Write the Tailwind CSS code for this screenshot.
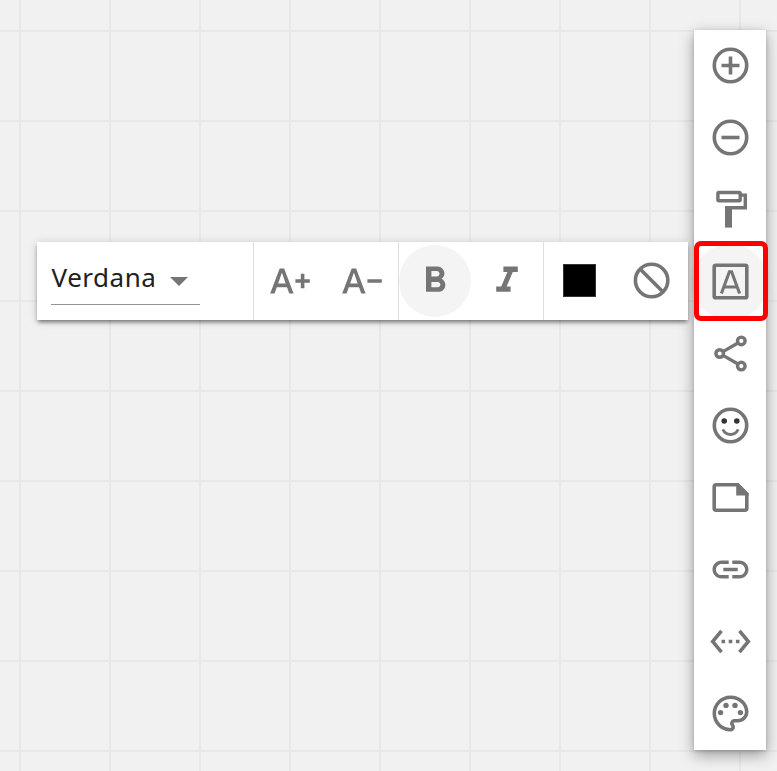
<!DOCTYPE html>
<html lang="en">
<head>
<meta charset="utf-8">
<title>Text formatting</title>
<script src="https://cdn.jsdelivr.net/npm/@tailwindcss/browser@4"></script>
</head>
<body class="relative h-[771px] w-[777px] overflow-hidden bg-[#f1f1f1] font-['Noto_Sans',sans-serif] text-[#757575]">
<div class="absolute inset-0 bg-[linear-gradient(to_right,#e8e8e8_2px,transparent_2px),linear-gradient(to_bottom,#e8e8e8_2px,transparent_2px)] bg-[length:90px_90px] bg-[position:19px_0px,0px_30px]"></div>

<!-- vertical tool rail -->
<nav class="absolute left-[694px] top-[30px] flex h-[720px] w-[72px] flex-col bg-white shadow-[0_5px_14px_rgba(0,0,0,0.36),0_1px_4px_rgba(0,0,0,0.14)]">
  <button class="size-[72px]"><svg class="size-[72px]" viewBox="0 0 72 72" fill="none" stroke="currentColor" stroke-width="3.6"><circle cx="36.5" cy="35.5" r="16.2"/><path d="M36.5 26.5v18M27.5 35.5h18"/></svg></button>
  <button class="size-[72px]"><svg class="size-[72px]" viewBox="0 0 72 72" fill="none" stroke="currentColor" stroke-width="3.6"><circle cx="36.5" cy="35.5" r="16.2"/><path d="M27.5 35.5h18"/></svg></button>
  <button class="size-[72px]"><svg class="size-[72px]" viewBox="0 0 72 72" fill="none" stroke="currentColor" stroke-width="3.4"><rect x="23.9" y="18.5" width="22.3" height="8.2" rx="1"/><path d="M47 21.1H51.3V33.7H31"/><path d="M34.5 32V53.6" stroke-width="7"/></svg></button>
  <button class="size-[72px] rounded-full bg-[#f4f4f4] shadow-[0_0_5px_rgba(0,0,0,0.12)]"><svg class="size-[72px]" viewBox="0 0 72 72" fill="none" stroke="currentColor"><rect x="20.2" y="19.2" width="32.6" height="32.6" rx="1.6" stroke-width="3.6"/><path d="M27.4 47.5L35.4 25.8H37.6L45.6 47.5M30.3 41H42.7" stroke-width="3.1"/></svg></button>
  <button class="size-[72px]"><svg class="size-[72px]" viewBox="0 0 72 72" fill="none" stroke="currentColor" stroke-width="3.4"><path d="M29.5 33.4L43.5 25.2M29.5 37.6L43.5 45.8"/><circle cx="47.3" cy="22.9" r="3.8"/><circle cx="25.7" cy="35.5" r="3.8"/><circle cx="47.3" cy="48.1" r="3.8"/></svg></button>
  <button class="size-[72px]"><svg class="size-[72px]" viewBox="0 0 72 72" fill="none" stroke="currentColor"><circle cx="36.5" cy="35.5" r="16.2" stroke-width="3.6"/><path d="M28.8 39.3C32.2 46.2 40.8 46.2 44.2 39.3" stroke-width="2.8"/><g fill="#333" stroke="none"><circle cx="30.2" cy="31" r="2.8"/><circle cx="42.8" cy="31" r="2.8"/></g></svg></button>
  <button class="size-[72px]"><svg class="size-[72px]" viewBox="0 0 72 72" fill="none" stroke="currentColor" stroke-width="3.6"><path d="M22.2 22.8H43.6L52.8 32V46.2Q52.8 48.2 50.8 48.2H22.2Q20.2 48.2 20.2 46.2V24.8Q20.2 22.8 22.2 22.8Z"/><path d="M42.2 21H44.3L54.6 31.3V33.5H42.2Z" fill="currentColor" stroke="none"/></svg></button>
  <button class="grid size-[72px] place-items-center"><svg class="size-[44px]" viewBox="-.5 .06 24.44 24.44" fill="currentColor"><path d="M3.9 12c0-1.71 1.39-3.1 3.1-3.1h4V7H7c-2.76 0-5 2.24-5 5s2.24 5 5 5h4v-1.9H7c-1.71 0-3.1-1.39-3.1-3.1zM8 13h8v-2H8v2zm9-6h-4v1.9h4c1.71 0 3.1 1.39 3.1 3.1s-1.39 3.1-3.1 3.1h-4V17h4c2.76 0 5-2.24 5-5s-2.24-5-5-5z"/></svg></button>
  <button class="grid size-[72px] place-items-center"><svg class="size-[44px]" viewBox="-.5 .06 24.44 24.44" fill="currentColor"><path d="M7.77 6.76L6.23 5.48.82 12l5.41 6.52 1.54-1.28L3.42 12l4.35-5.24zM7 13h2v-2H7v2zm10-2h-2v2h2v-2zm-6 2h2v-2h-2v2zm6.77-7.52l-1.54 1.28L20.58 12l-4.35 5.24 1.54 1.28L23.18 12l-5.41-6.52z"/></svg></button>
  <button class="grid size-[72px] place-items-center"><svg class="size-[44px]" viewBox="-.5 .06 24.44 24.44" fill="currentColor"><path d="M12 22C6.49 22 2 17.51 2 12S6.49 2 12 2s10 4.04 10 9c0 3.31-2.69 6-6 6h-1.77c-.28 0-.5.22-.5.5 0 .12.05.23.13.33.41.47.64 1.06.64 1.67A2.5 2.5 0 0 1 12 22zm0-18c-4.41 0-8 3.59-8 8s3.59 8 8 8c.28 0 .5-.22.5-.5a.54.54 0 0 0-.14-.35c-.41-.46-.63-1.05-.63-1.65a2.5 2.5 0 0 1 2.5-2.5H16c2.21 0 4-1.79 4-4 0-3.86-3.59-7-8-7z"/><circle cx="6.5" cy="11.5" r="1.5"/><circle cx="9.5" cy="7.5" r="1.5"/><circle cx="14.5" cy="7.5" r="1.5"/><circle cx="17.5" cy="11.5" r="1.5"/></svg></button>
</nav>

<!-- text toolbar -->
<div class="absolute left-[37px] top-[242px] flex h-[78px] w-[651px] bg-white shadow-[0_3px_4px_-1px_rgba(0,0,0,0.48),0_1px_9px_rgba(0,0,0,0.16)]">
  <div class="w-[216px] pl-[14px]">
    <div class="flex h-[63px] w-[149px] items-center border-b border-[#949494]">
      <span class="relative left-[0.6px] top-[4px] text-[26px] leading-[36px] tracking-[0.5px] text-[#212121]">Verdana</span>
      <svg class="relative top-[8px] ml-auto mr-[12px] h-[9px] w-[18px]" viewBox="0 0 18 9" fill="currentColor"><path d="M0 0H18L9 9Z"/></svg>
    </div>
  </div>
  <div class="flex w-[145px] items-center border-l border-[#dedede]">
    <button class="grid size-[72px] place-items-center"><svg class="size-[44px]" viewBox="-.22 -.22 24.44 24.44" fill="currentColor"><path d="M.99 19h2.42l1.27-3.58h5.65L11.59 19h2.42L8.75 5h-2.5L.99 19zm4.42-5.61L7.44 7.6h.12l2.03 5.79H5.41zM20 11h3v2h-3v3h-2v-3h-3v-2h3V8h2v3z"/></svg></button>
    <button class="grid size-[72px] place-items-center"><svg class="size-[44px]" viewBox="-.22 -.22 24.44 24.44" fill="currentColor"><path d="M.99 19h2.42l1.27-3.58h5.65L11.59 19h2.42L8.75 5h-2.5L.99 19zm4.42-5.61L7.44 7.6h.12l2.03 5.79H5.41zM23 11v2h-8v-2h8z"/></svg></button>
  </div>
  <div class="flex w-[145px] items-center border-l border-[#dedede]">
    <button class="grid size-[72px] place-items-center rounded-full bg-[#f4f4f4]"><svg class="size-[44px]" viewBox="-.22 -.22 24.44 24.44" fill="currentColor"><path d="M15.6 10.79c.97-.67 1.65-1.77 1.65-2.79 0-2.26-1.75-4-4-4H7v14h7.04c2.09 0 3.71-1.7 3.71-3.79 0-1.52-.86-2.82-2.15-3.42zM10 6.5h3c.83 0 1.5.67 1.5 1.5s-.67 1.5-1.5 1.5h-3v-3zm3.5 9H10v-3h3.5c.83 0 1.5.67 1.5 1.5s-.67 1.5-1.5 1.5z"/></svg></button>
    <button class="grid size-[72px] place-items-center"><svg class="size-[44px]" viewBox="-.22 -.22 24.44 24.44" fill="currentColor"><path d="M10 4v3h2.21l-3.42 8H6v3h8v-3h-2.21l3.42-8H18V4z"/></svg></button>
  </div>
  <div class="flex w-[145px] items-center border-l border-[#dedede]">
    <button class="size-[72px] pb-[1px] pl-[19px]"><span class="block size-[33px] border border-[#333] bg-black"></span></button>
    <button class="grid size-[72px] place-items-center"><svg class="size-[44px]" viewBox="-.0 .05 24.44 24.44" fill="none" stroke="currentColor" stroke-width="2"><circle cx="12" cy="12" r="9"/><path d="M5.6 5.6L18.4 18.4"/></svg></button>
  </div>
</div>

<div class="absolute left-[694px] top-[241px] h-[80px] w-[74px] rounded-[7px] border-5 border-[#ff0000]"></div>
</body>
</html>
